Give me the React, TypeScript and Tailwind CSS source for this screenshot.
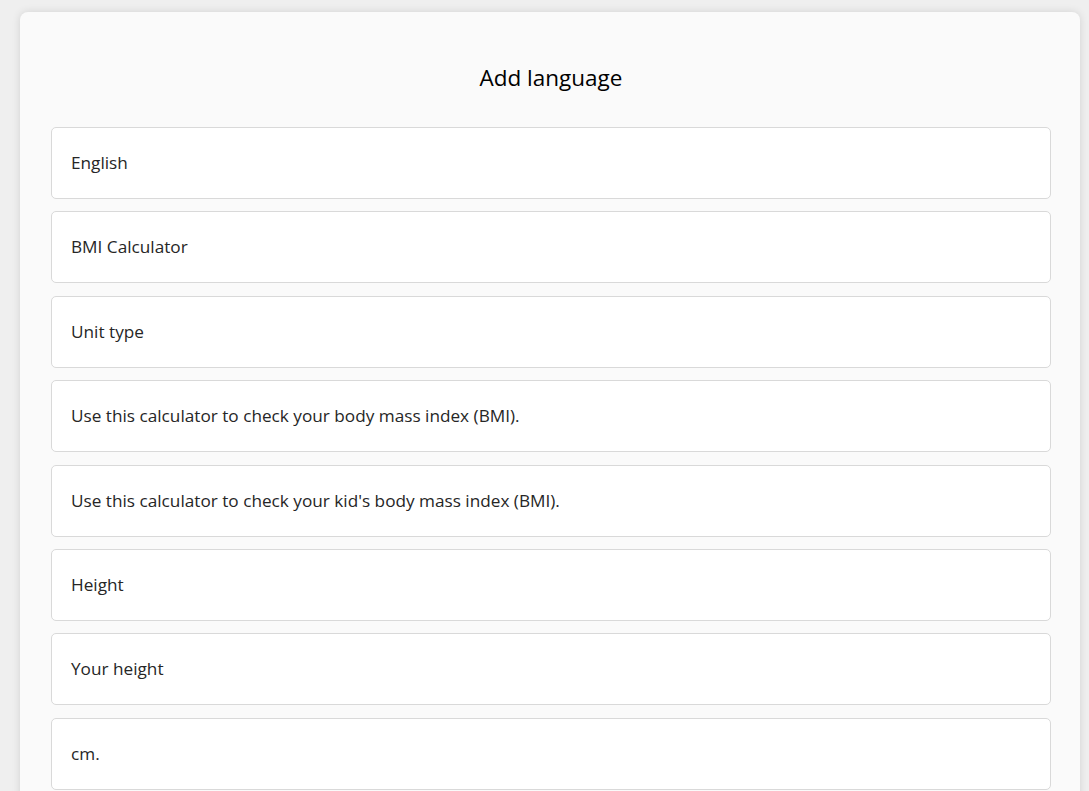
import React from "react";

const items = [
  "English",
  "BMI Calculator",
  "Unit type",
  "Use this calculator to check your body mass index (BMI).",
  "Use this calculator to check your kid's body mass index (BMI).",
  "Height",
  "Your height",
  "cm.",
];

export default function App() {
  return (
    <div className="h-[791px] overflow-hidden bg-[#efefef] pt-[12px] pl-[20px] pr-[9px]" style={{ fontFamily: '"Open Sans", "Noto Sans", sans-serif' }}>
      <div className="rounded-[8px] bg-[#fafafa] shadow-[0_0_8px_rgba(0,0,0,0.12)] pl-[31px] pr-[29px] pt-[51px] pb-[40px]">
        <h1 className="text-center text-[22.5px] font-medium leading-[30px] text-black mb-[34px]">Add language</h1>
        <div className="flex flex-col gap-[12.4px]">
          {items.map((t) => (
            <div key={t} className="h-[72px] flex items-center rounded-[5px] border border-[#d9d9d9] bg-white pl-[19px] text-[17.2px] font-medium text-[#262626]">
              {t}
            </div>
          ))}
        </div>
      </div>
    </div>
  );
}
